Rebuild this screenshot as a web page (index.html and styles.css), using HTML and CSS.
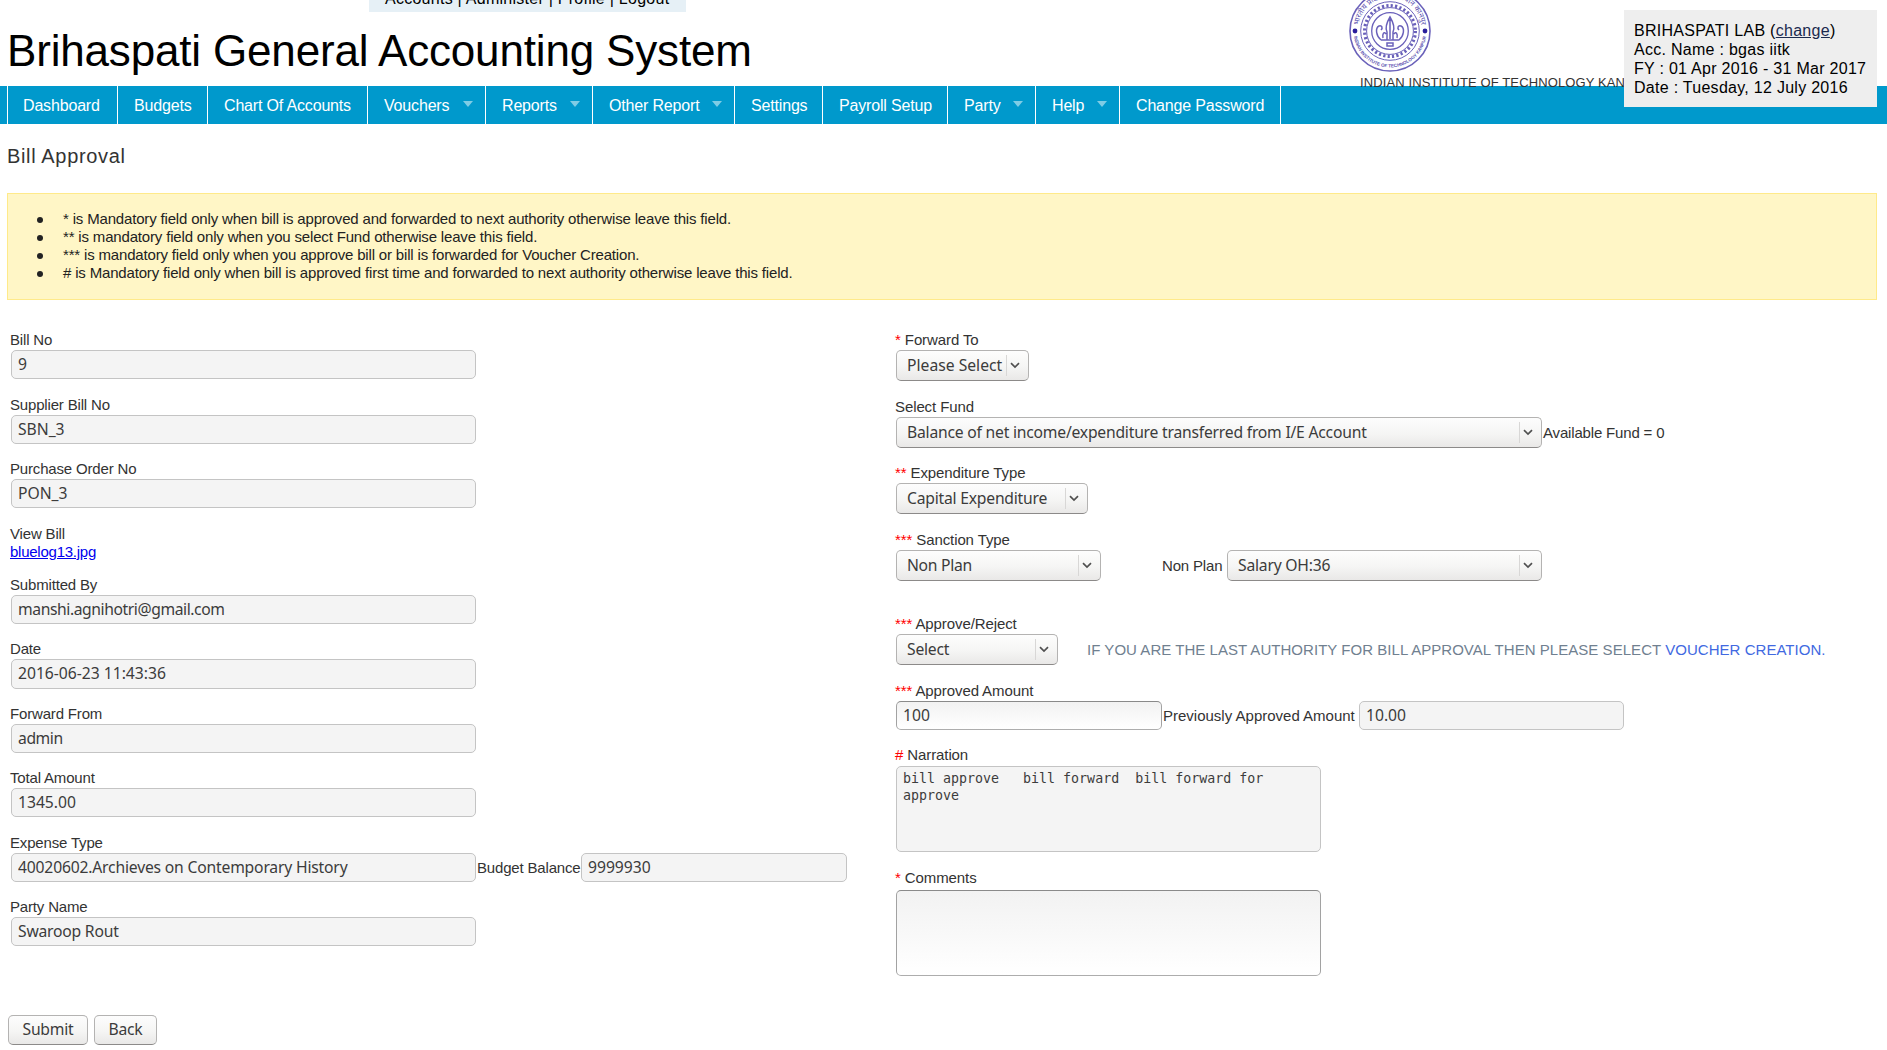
FILE: index.html
```html
<!DOCTYPE html>
<html lang="en">
<head>
<meta charset="utf-8">
<title>Bill Approval - Brihaspati General Accounting System</title>
<link rel="stylesheet" href="styles.css">
</head>
<body>
<svg width="0" height="0" class="defs"><defs><path id="chevron" d="M1 1.2 L5 5 L9 1.2" fill="none" stroke="#505050" stroke-width="1.7"/></defs></svg>
<header class="header">
  <div class="brand">
    <div class="toplinks">Accounts | Administer | Profile | Logout</div>
    <h1 class="title">Brihaspati General Accounting System</h1>
  </div>
  <div class="institute">
    <svg class="seal" width="84" height="84" viewBox="-42 -42 84 84">
      <defs>
        <path id="arcBottom" d="M-36.5 0 A36.5 36.5 0 0 0 36.5 0"/>
        <path id="arcTop" d="M-31.5 -2 A31.5 31.5 0 0 1 31.5 -2"/>
      </defs>
      <g fill="none" stroke="#6a61ba">
        <circle r="40" stroke-width="1.6"/>
        <circle r="29.3" stroke-width="1"/>
        <circle r="25.4" stroke-width="3.2" stroke-dasharray="2.2 2.23"/>
        <circle r="23.4" stroke-width="1"/>
        <circle r="18.3" stroke-width="1.3"/>
        <path d="M-9 9 H9 M-9 9 C-14 5 -15 -3 -11 -5 C-8 -6 -7 -3 -9 -1 M9 9 C14 5 15 -3 11 -5 C8 -6 7 -3 9 -1 M-3 9 V1 C-5 -3 -3 -9 0 -14 C3 -9 5 -3 3 1 V9 M0 -13 V8 M-7 7 C-8 3 -6 0 -4 3 M7 7 C8 3 6 0 4 3 M-3 12 V15 H3 V12 Z" stroke-width="1.5"/>
      </g>
      <circle cx="-35" r="2.4" fill="#2a1f9c"/><circle cx="35" r="2.4" fill="#2a1f9c"/>
      <text class="seal-text"><textPath href="#arcBottom" startOffset="50%" text-anchor="middle">INDIAN INSTITUTE OF TECHNOLOGY KANPUR</textPath></text>
      <text class="seal-hindi"><textPath href="#arcTop" startOffset="50%" text-anchor="middle">भारतीय प्रौद्योगिकी संस्थान कानपुर</textPath></text>
    </svg>
    <div class="institute-name">INDIAN INSTITUTE OF TECHNOLOGY KANPUR</div>
  </div>
  <div class="account">
    <div>BRIHASPATI LAB (<a href="#">change</a>)</div>
    <div>Acc. Name : bgas iitk</div>
    <div>FY : 01 Apr 2016 - 31 Mar 2017</div>
    <div>Date : Tuesday, 12 July 2016</div>
  </div>
</header>
<nav class="nav">
  <a>Dashboard</a><a>Budgets</a><a>Chart Of Accounts</a><a class="has-menu">Vouchers</a><a class="has-menu">Reports</a><a class="has-menu">Other Report</a><a>Settings</a><a>Payroll Setup</a><a class="has-menu">Party</a><a class="has-menu">Help</a><a class="last">Change Password</a>
</nav>
<main class="main">
  <h2 class="heading">Bill Approval</h2>
  <ul class="notice">
    <li>* is Mandatory field only when bill is approved and forwarded to next authority otherwise leave this field.</li>
    <li>** is mandatory field only when you select Fund otherwise leave this field.</li>
    <li>*** is mandatory field only when you approve bill or bill is forwarded for Voucher Creation.</li>
    <li># is Mandatory field only when bill is approved first time and forwarded to next authority otherwise leave this field.</li>
  </ul>
  <form class="form">
    <div class="col left">
      <div><label>Bill No</label><input class="num" value="9" readonly></div>
      <div><label>Supplier Bill No</label><input class="num" value="SBN_3" readonly></div>
      <div><label>Purchase Order No</label><input class="num" value="PON_3" readonly></div>
      <div><label class="file-label">View Bill</label><a class="file" href="#">bluelog13.jpg</a></div>
      <div><label>Submitted By</label><input class="mail" value="manshi.agnihotri@gmail.com" readonly></div>
      <div><label>Date</label><input class="num tall" value="2016-06-23 11:43:36" readonly></div>
      <div><label>Forward From</label><input class="mail" value="admin" readonly></div>
      <div><label>Total Amount</label><input class="num" value="1345.00" readonly></div>
      <div><label>Expense Type</label>
        <div class="line inputs"><input class="expense" value="40020602.Archieves on Contemporary History" readonly><span class="balance">Budget Balance</span><input class="num short" value="9999930" readonly></div></div>
      <div><label>Party Name</label><input value="Swaroop Rout" readonly></div>
    </div>
    <div class="col right">
      <div><label><b>*</b> Forward To</label><div class="select w-forward num"><span>Please Select</span><svg width="10" height="7"><use href="#chevron"/></svg></div></div>
      <div><label>Select Fund</label>
        <div class="line"><div class="select w-fund"><span>Balance of net income/expenditure transferred from I/E Account</span><svg width="10" height="7"><use href="#chevron"/></svg></div><span class="available">Available Fund = 0</span></div></div>
      <div><label><b>**</b> Expenditure Type</label><div class="select w-type"><span>Capital Expenditure</span><svg width="10" height="7"><use href="#chevron"/></svg></div></div>
      <div><label><b>***</b> Sanction Type</label>
        <div class="line"><div class="select w-sanction"><span>Non Plan</span><svg width="10" height="7"><use href="#chevron"/></svg></div><span class="plan">Non Plan</span><div class="select w-salary"><span>Salary OH:36</span><svg width="10" height="7"><use href="#chevron"/></svg></div></div></div>
      <div><label><b>***</b> Approve/Reject</label>
        <div class="line"><div class="select w-approve"><span>Select</span><svg width="10" height="7"><use href="#chevron"/></svg></div><span class="hint">IF YOU ARE THE LAST AUTHORITY FOR BILL APPROVAL THEN PLEASE SELECT <em>VOUCHER CREATION.</em></span></div></div>
      <div><label><b>***</b> Approved Amount</label>
        <div class="line inputs"><input class="num short editable" value="100"><span class="previous">Previously Approved Amount</span><input class="num short approved" value="10.00" readonly></div></div>
      <div><label class="narration"><b>#</b> Narration</label><textarea readonly>bill approve   bill forward  bill forward for approve</textarea></div>
      <div><label class="comments"><b>*</b> Comments</label><textarea class="editable"></textarea></div>
    </div>
  </form>
  <div class="actions"><button class="submit">Submit</button><button class="back">Back</button></div>
</main>
</body>
</html>
```
FILE: styles.css
```css
* { box-sizing: border-box; }
body {
  margin: 0;
  height: 1050px;
  overflow: hidden;
  background: #fff;
  color: #333;
  font: 15px/18px "Liberation Sans", Arial, sans-serif;
  letter-spacing: -0.17px;
}
.defs { display: block; }

/* Header */
.header { position: relative; display: flex; height: 86px; }
.brand { width: 1348px; }
.toplinks {
  display: flex;
  align-items: flex-end;
  width: 317px;
  height: 12px;
  margin-left: 369px;
  padding: 0 16px 4px;
  background: #e6f0f6;
  color: #000;
  font-size: 16px;
  letter-spacing: 0.26px;
  white-space: nowrap;
}
.title {
  margin: 13px 0 0 7px;
  color: #000;
  font-size: 44px;
  font-weight: 400;
  line-height: 52px;
  letter-spacing: -0.17px;
}
.institute { width: 330px; }
.seal { display: block; margin-top: -11px; }
.seal-text { font: 700 4.6px "Liberation Sans", sans-serif; fill: #5a50b0; letter-spacing: 0; }
.seal-hindi { font: 7.5px "Noto Sans", sans-serif; fill: #5a50b0; letter-spacing: 0; }
.institute-name {
  position: relative;
  z-index: 1;
  margin: 1px 0 0 12px;
  font-size: 13px;
  line-height: 18px;
  letter-spacing: 0.12px;
}
.account {
  position: absolute;
  z-index: 2;
  left: 1624px;
  top: 10px;
  width: 253px;
  height: 97px;
  padding: 11px 10px;
  background: #eee;
  color: #000;
  font-size: 16px;
  line-height: 19px;
  letter-spacing: 0.28px;
  white-space: nowrap;
}
.account a { color: #1b2a4e; }

/* Navigation */
.nav {
  display: grid;
  grid-template-columns: 110px 90px 160px 118px 107px 142px 88px 125px 88px 84px 162px;
  height: 38px;
  padding-left: 7px;
  background: #0099cc;
}
.nav a {
  display: flex;
  justify-content: space-between;
  padding: 0 12px 0 16px;
  border-left: 1px solid #fff;
  color: #fff;
  font-size: 16px;
  line-height: 39px;
  white-space: nowrap;
}
.nav a:first-child { padding-left: 15px; }
.nav .last { border-right: 1px solid #fff; }
.has-menu::after {
  content: "";
  height: 0;
  margin-top: 15px;
  border: 5px solid transparent;
  border-top: 6px solid #7fcce5;
  border-bottom: 0;
}

/* Page heading and notice */
.main { padding: 0 10px 0 7px; }
.heading {
  margin: 20px 0 0;
  font-size: 20px;
  font-weight: 400;
  line-height: 24px;
  letter-spacing: 0.65px;
}
.notice {
  height: 107px;
  margin: 25px 0 0;
  padding: 16px 0 0 29px;
  border: 1px solid #ffea8a;
  background: #fff6c6;
  color: #222;
  letter-spacing: -0.17px;
  list-style: none;
}
.notice li { display: flex; align-items: center; }
.notice li::before {
  content: "";
  width: 6px;
  height: 6px;
  margin: 2px 20px 0 0;
  border-radius: 50%;
  background: #222;
}

/* Bill form */
.form { display: grid; grid-template-columns: 885px 1fr; padding: 30px 0 0 3px; }
.col { display: grid; align-content: start; }
.left { grid-template-rows: 65px 64px 65px 51px 64px 65px 64px 65px 64px 64px; }
.right { grid-template-rows: 67px 66px 67px 84px 67px 64px 123px 123px; }
label { display: block; height: 20px; padding-top: 1px; }
.right label { letter-spacing: -0.1px; }
label b { color: #f00; font-weight: 400; }
.file-label { height: 19px; }
.narration { height: 21px; }
.comments { height: 22px; }
.line { display: flex; white-space: nowrap; line-height: 32px; }
.inputs { line-height: 30px; }
input, textarea, .select, button {
  margin: 0;
  color: #3c3c3c;
  font: 15.7px/22px "Noto Sans", "Open Sans", sans-serif;
  letter-spacing: -0.22px;
}
input {
  display: block;
  width: 465px;
  height: 29px;
  margin-left: 1px;
  padding: 0 6px 2px;
  border: 1px solid #c4c4c4;
  border-radius: 5px;
  background: #f4f4f4;
}
.num { letter-spacing: -0.02px; }
.mail { letter-spacing: -0.42px; }
.expense { letter-spacing: -0.19px; }
.tall { height: 30px; }
.short { width: 266px; }
.approved { width: 265px; }
.balance { width: 104px; padding-left: 1px; }
.file { display: block; color: #00e; letter-spacing: -0.25px; }
.select {
  position: relative;
  display: flex;
  align-items: center;
  justify-content: space-between;
  height: 31px;
  margin-left: 1px;
  padding: 0 8px 1px 10px;
  border: 1px solid #b4b3b2;
  border-bottom-color: #8c8a89;
  border-radius: 5px;
  background: linear-gradient(#fdfdfd, #f5f5f4 55%, #e9e8e7);
  white-space: nowrap;
}
.select::after {
  content: "";
  position: absolute;
  right: 21px;
  top: 4px;
  width: 1px;
  height: 21px;
  background: #d8d7d6;
}
.select.num { letter-spacing: 0; }
.w-forward { width: 133px; }
.w-fund { width: 646px; }
.w-type { width: 192px; }
.w-sanction { width: 205px; }
.w-salary { width: 315px; margin-left: 0; }
.w-approve { width: 162px; }
.w-sanction { letter-spacing: -0.3px; }
.available { padding-left: 1px; }
.plan { width: 126px; padding-left: 61px; }
.hint { padding-left: 29px; color: #708090; letter-spacing: 0.04px; }
.hint em { color: #4169e1; font-style: normal; }
.previous { width: 196px; padding-left: 1px; letter-spacing: 0; }
textarea {
  display: block;
  width: 425px;
  height: 86px;
  margin-left: 1px;
  padding: 3px 6px;
  border: 1px solid #c4c4c4;
  border-radius: 5px;
  background: #f4f4f4;
  font: 13.3px/17px "DejaVu Sans Mono", monospace;
  letter-spacing: 0;
  resize: none;
}
.editable {
  border-color: #8a8a8a #a2a2a2 #adadad;
  background: linear-gradient(#f2f2f2, #fff);
}

/* Buttons */
.actions { display: flex; gap: 6px; margin-top: 24px; }
button {
  height: 30px;
  margin-left: 1px;
  padding: 0 0 2px;
  border: 1px solid #b4b3b2;
  border-bottom-color: #8c8a89;
  border-radius: 5px;
  background: linear-gradient(#fdfdfd, #f5f5f4 55%, #e9e8e7);
}
.submit { width: 80px; }
.back { width: 63px; margin-left: 0; }
```
